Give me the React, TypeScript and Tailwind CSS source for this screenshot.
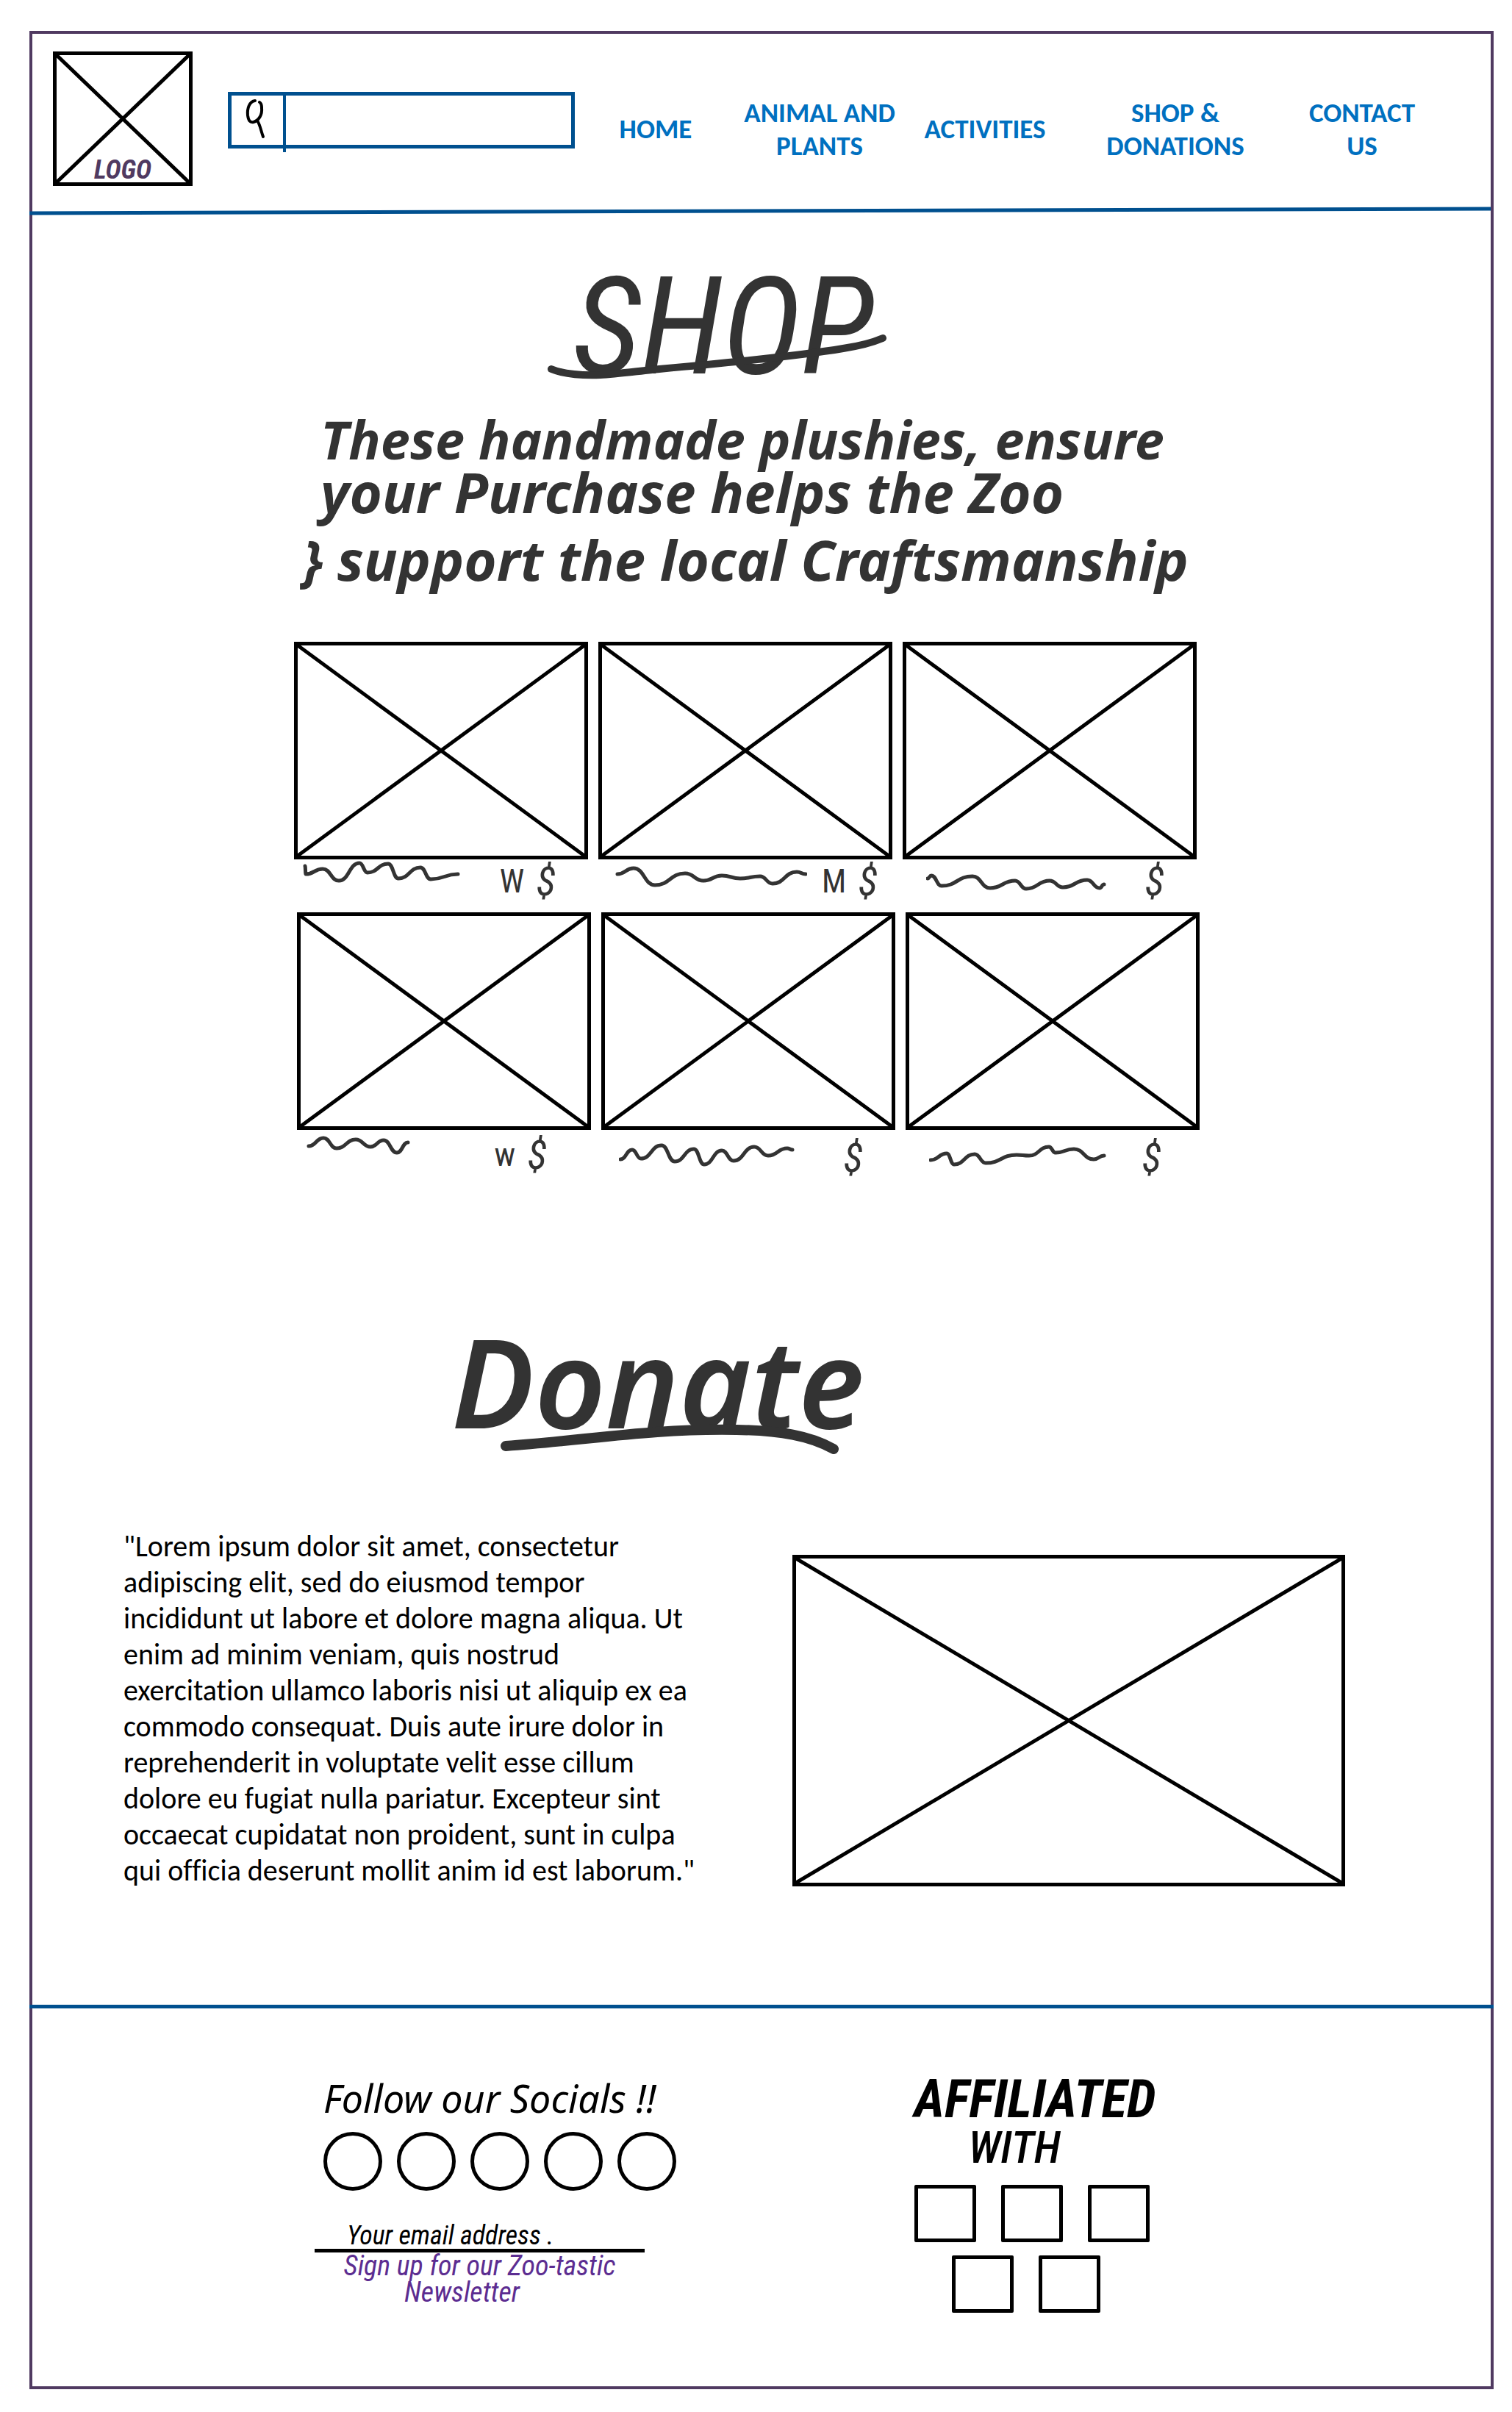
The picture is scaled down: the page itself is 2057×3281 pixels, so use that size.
type Point = [number, number];

const HAND = 'font-["Noto_Sans",sans-serif]';
const NARROW = 'font-["Roboto_Condensed",Roboto,sans-serif]';

const NAV_LINKS = ['HOME', 'ANIMAL AND PLANTS', 'ACTIVITIES', 'SHOP & DONATIONS', 'CONTACT US'];

type Product = {
  name: string;
  points: Point[];
  width: number;
  mark?: string;
  layout: string;
};

const ROW_ONE: Product[] = [
  {
    name: 'Plushie 1',
    width: 214,
    mark: 'W',
    layout: 'pl-3 pr-11',
    points: [[3, 9], [4, 20], [27, 13], [49, 29], [77, 5], [88, 18], [116, 6], [130, 26], [160, 11], [174, 27], [211, 20]],
  },
  {
    name: 'Plushie 2',
    width: 272,
    mark: 'M',
    layout: 'pl-3 pr-5',
    points: [[14, 20], [36, 12], [65, 35], [106, 19], [131, 29], [156, 22], [181, 26], [208, 23], [225, 33], [258, 17], [270, 20]],
  },
  {
    name: 'Plushie 3',
    width: 246,
    layout: 'pl-8 pr-11',
    points: [[2, 26], [7, 22], [21, 36], [63, 23], [87, 39], [121, 29], [136, 40], [168, 29], [186, 38], [219, 28], [236, 39], [242, 34]],
  },
];

const ROW_TWO: Product[] = [
  {
    name: 'Plushie 4',
    width: 142,
    mark: 'w',
    layout: 'pt-1 pl-3 pr-15',
    points: [[4, 18], [24, 7], [42, 21], [68, 9], [88, 19], [106, 10], [124, 27], [139, 13]],
  },
  {
    name: 'Plushie 5',
    width: 240,
    layout: 'pt-2 pl-6 pr-11',
    points: [[2, 32], [18, 19], [30, 31], [58, 13], [76, 35], [102, 18], [116, 39], [140, 20], [156, 34], [184, 15], [203, 27], [229, 17], [236, 19]],
  },
  {
    name: 'Plushie 6',
    width: 242,
    layout: 'pt-2 pl-8 pr-13',
    points: [[2, 33], [24, 24], [34, 39], [62, 25], [77, 37], [119, 26], [136, 27], [163, 15], [172, 23], [197, 18], [224, 32], [238, 27]],
  },
];

// Joins the turning points with curves that are level at every peak and trough.
function wave(points: Point[]) {
  return points
    .map(([x, y], i) => {
      if (i === 0) return `M${x} ${y}`;
      const [px, py] = points[i - 1];
      const mid = (px + x) / 2;
      return `C${mid} ${py} ${mid} ${y} ${x} ${y}`;
    })
    .join(' ');
}

function CrossBox({ className, label }: { className: string; label: string }) {
  return (
    <div role="img" aria-label={label} className={`relative border-5 border-black ${className}`}>
      <svg className="absolute inset-0 h-full w-full" viewBox="0 0 100 100" preserveAspectRatio="none" aria-hidden="true">
        <path d="M0 0L100 100M100 0L0 100" stroke="#000" strokeWidth="5" vectorEffect="non-scaling-stroke" />
      </svg>
    </div>
  );
}

function ProductCard({ product }: { product: Product }) {
  return (
    <li className="min-w-0 flex-1">
      <CrossBox label={product.name} className="h-[296px]" />
      <div className={`flex h-18 items-start ${product.layout}`}>
        <svg width={product.width} height="44" viewBox={`0 0 ${product.width} 44`} fill="none" className="shrink-0" aria-hidden="true">
          <path d={wave(product.points)} stroke="#333" strokeWidth="5" strokeLinecap="round" strokeLinejoin="round" />
        </svg>
        <div className={`ml-auto flex items-center gap-4 text-[#333] ${NARROW}`}>
          {product.mark && <span className="text-[44px] leading-[60px]">{product.mark}</span>}
          <span className="text-[56px] leading-[60px] italic">$</span>
        </div>
      </div>
    </li>
  );
}

function Header() {
  return (
    <header>
      <div className="flex items-center pt-6 pr-[68px] pb-7 pl-7">
        <a href="#home" className="relative block shrink-0">
          <CrossBox label="Logo" className="h-[183px] w-[190px]" />
          <span className={`absolute inset-x-0 bottom-1 text-center text-[36px] leading-[36px] font-bold text-[#503a61] italic ${NARROW}`}>
            LOGO
          </span>
        </a>
        <form className="mt-1 ml-12 flex h-[77px] w-[472px] shrink-0 items-start border-5 border-[#00508f]">
          <button type="button" aria-label="Search" className="flex h-[77px] w-[74px] shrink-0 justify-center border-r-4 border-[#00508f] pt-1">
            <svg width="40" height="56" viewBox="0 0 40 56" fill="none" aria-hidden="true">
              <path
                d="M17 3C9 4 6 14 7 23C8 30 10 33 15 32C22 30 27 22 26 13C26 8 25 6 23 5M20 30C24 36 25 44 28 52"
                stroke="#000"
                strokeWidth="4"
                strokeLinecap="round"
                strokeLinejoin="round"
              />
            </svg>
          </button>
          <input type="search" aria-label="Search the site" className="h-full min-w-0 flex-1 px-4 text-[32px] outline-none" />
        </form>
        <nav className="grid flex-1 grid-cols-[220fr_226fr_224fr_294fr_214fr] items-center pt-7 text-center text-[37px] leading-[45px] font-bold text-[#0070c0]">
          {NAV_LINKS.map((link) => (
            <a key={link} href="#" className="px-1 last:px-5">
              {link}
            </a>
          ))}
        </nav>
      </div>
      <div className="-mx-1">
        <svg className="block h-3 w-full" viewBox="0 0 1000 12" preserveAspectRatio="none" aria-hidden="true">
          <path d="M0 9L998 3" stroke="#00508f" strokeWidth="5" vectorEffect="non-scaling-stroke" />
        </svg>
      </div>
    </header>
  );
}

function Shop() {
  return (
    <section className="flex justify-center pt-16 pr-10 text-[#333]">
      <div className="w-full max-w-[1232px]">
        <div className="flex justify-center pr-16">
          <h1 className={`relative text-[184px] leading-[176px] italic ${NARROW}`}>
            SHOP
            <svg className="absolute bottom-1 -left-8 overflow-visible" width="460" height="60" viewBox="0 0 460 60" fill="none" aria-hidden="true">
              <path
                d="M3 33C20 40 40 42 70 41C90 40 120 36 150 33C250 24 340 15 400 5C420 2 440 -3 454 -9"
                stroke="#333"
                strokeWidth="10"
                strokeLinecap="round"
              />
            </svg>
          </h1>
        </div>
        <p className={`mt-7 pl-3 text-[76px] leading-[72px] font-bold whitespace-nowrap italic ${HAND}`}>
          <span className="block pl-6 text-[72px]">These handmade plushies, ensure</span>
          <span className="block pl-6">your Purchase helps the Zoo</span>
          <span className="mt-5 block">{'}'} support the local Craftsmanship</span>
        </p>
        <ul className="mt-19 flex gap-3.5 pr-1">
          {ROW_ONE.map((product) => (
            <ProductCard key={product.name} product={product} />
          ))}
        </ul>
        <ul className="flex gap-3.5 pl-1">
          {ROW_TWO.map((product) => (
            <ProductCard key={product.name} product={product} />
          ))}
        </ul>
      </div>
    </section>
  );
}

function Donate() {
  return (
    <section className="pt-46">
      <div className="flex justify-center pr-[282px]">
        <h2 className={`relative text-[168px] leading-[170px] font-semibold text-[#333] italic ${HAND}`}>
          Donate
          <svg className="absolute -bottom-4 left-17 overflow-visible" width="460" height="40" viewBox="0 0 460 40" fill="none" aria-hidden="true">
            <path d="M6 28C120 20 200 4 320 6C380 7 420 14 452 32" stroke="#333" strokeWidth="14" strokeLinecap="round" />
          </svg>
        </h2>
      </div>
      <div className="flex items-start gap-[126px] pt-[116px] pr-[198px] pb-[158px] pl-31">
        <p className="w-[784px] shrink-0 text-[40px] leading-[49px] text-black [font-variant-ligatures:none]">
          "Lorem ipsum dolor sit amet, consectetur adipiscing elit, sed do eiusmod tempor incididunt ut labore et dolore magna
          aliqua. Ut enim ad minim veniam, quis nostrud exercitation ullamco laboris nisi ut aliquip ex ea commodo consequat.
          Duis aute irure dolor in reprehenderit in voluptate velit esse cillum dolore eu fugiat nulla pariatur. Excepteur sint
          occaecat cupidatat non proident, sunt in culpa qui officia deserunt mollit anim id est laborum."
        </p>
        <CrossBox label="Donation picture" className="mt-9 aspect-[752/451] flex-1" />
      </div>
    </section>
  );
}

function PartnerBox({ name }: { name: string }) {
  return <a href="#" aria-label={name} className="block h-[78px] w-[84px] rounded-xs border-5 border-black" />;
}

function Footer() {
  return (
    <footer className="-mx-1 flex items-start gap-81 border-t-5 border-[#00508f] pt-22 pb-25 pl-97 text-black">
      <div className="w-[492px] pt-1">
        <h2 className={`pl-3 text-[52px] leading-[60px] whitespace-nowrap italic ${HAND}`}>Follow our Socials !!</h2>
        <div className="mt-4 flex gap-5 pl-3">
          {[1, 2, 3, 4, 5].map((n) => (
            <a key={n} href="#" aria-label={`Social link ${n}`} className="block size-20 rounded-full border-5 border-black" />
          ))}
        </div>
        <form className={`mt-[34px] w-[449px] text-[36px] ${NARROW}`}>
          <input
            type="email"
            aria-label="Your email address"
            placeholder="Your email address ."
            className="block h-[50px] w-full border-b-5 border-black pt-2 pl-11 outline-none placeholder:text-black placeholder:italic"
          />
          <button type="button" className="block w-full text-[38px] leading-9 text-[#5c2d91] italic">
            Sign up for our Zoo-tastic
            <span className="block pr-12">Newsletter</span>
          </button>
        </form>
      </div>
      <div className="flex w-[328px] flex-col items-center">
        <h2 className={`text-center font-bold italic ${NARROW}`}>
          <span className="block text-[72px] leading-[72px]">AFFILIATED</span>
          <span className="block pr-14 text-[60px] leading-[60px] font-medium">WITH</span>
        </h2>
        <div className="mt-5 flex gap-[34px] pr-2">
          <PartnerBox name="Partner 1" />
          <PartnerBox name="Partner 2" />
          <PartnerBox name="Partner 3" />
        </div>
        <div className="mt-[18px] flex gap-[34px] pr-6">
          <PartnerBox name="Partner 4" />
          <PartnerBox name="Partner 5" />
        </div>
      </div>
    </footer>
  );
}

export default function App() {
  return (
    <div className='bg-white pt-[42px] pr-[25px] pb-7 pl-10 font-[Carlito,Calibri,Lato,sans-serif]'>
      <div className="border-4 border-[#503a61]">
        <Header />
        <main>
          <Shop />
          <Donate />
        </main>
        <Footer />
      </div>
    </div>
  );
}
